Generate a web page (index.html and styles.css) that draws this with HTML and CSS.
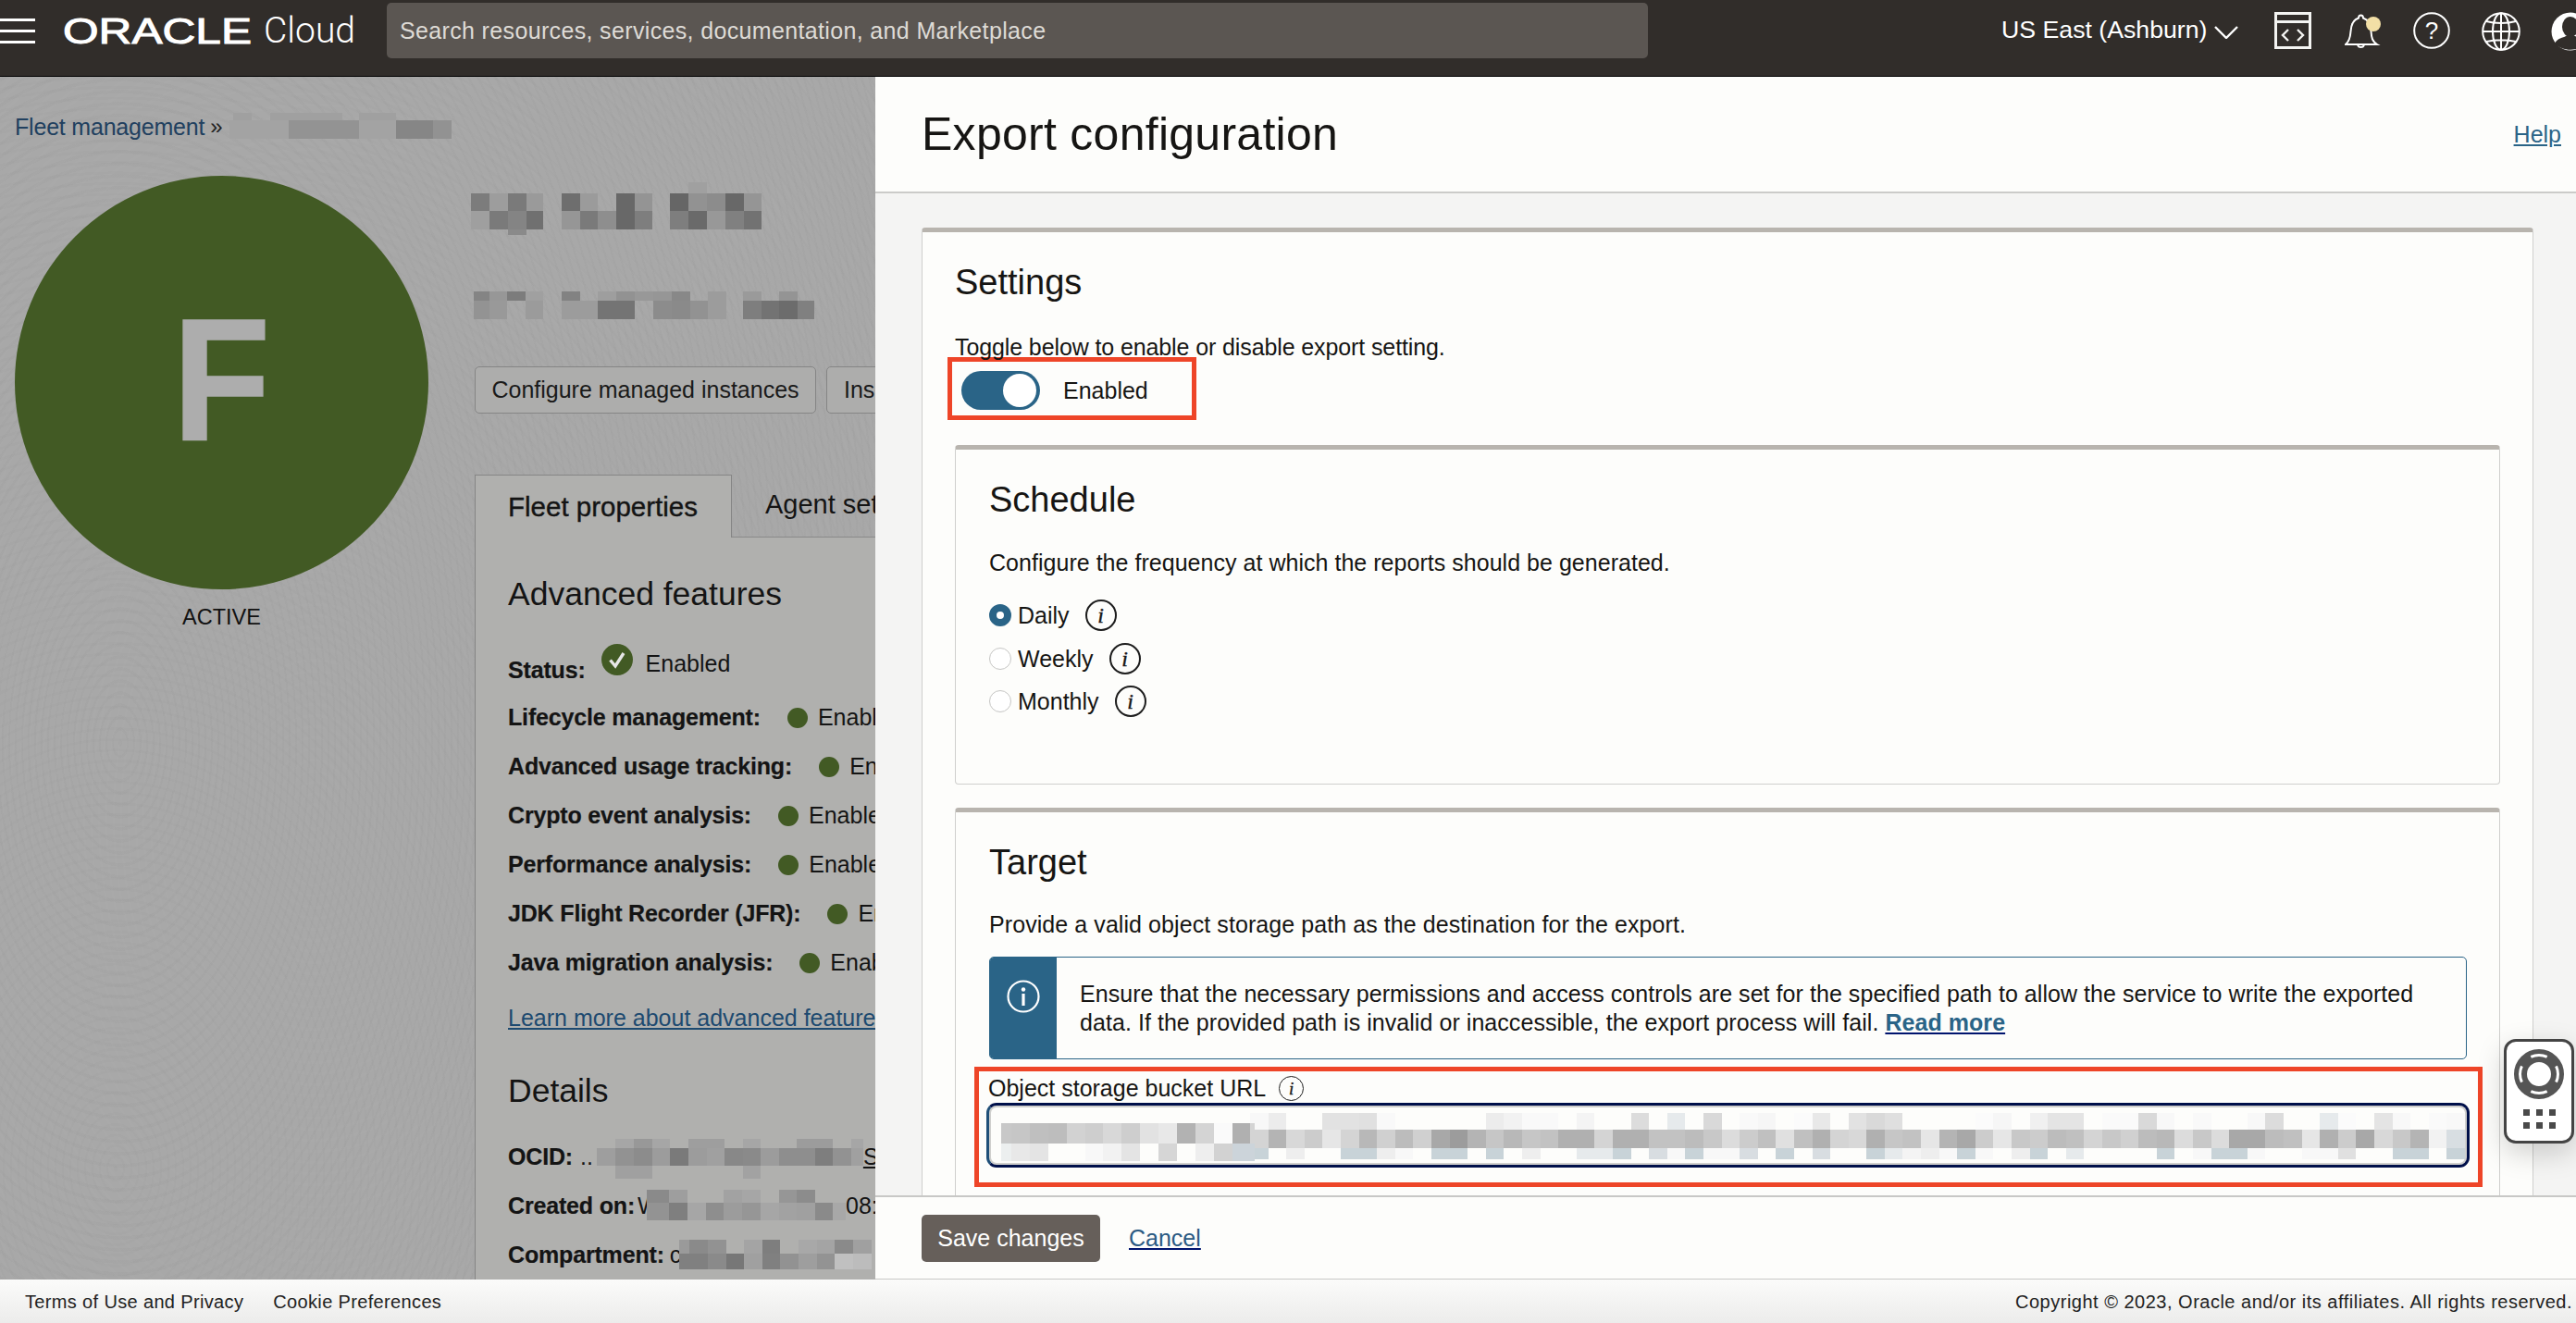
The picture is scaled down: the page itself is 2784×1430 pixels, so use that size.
FILE: index.html
```html
<!DOCTYPE html>
<html lang="en">
<head>
<meta charset="utf-8">
<title>Export configuration</title>
<link rel="stylesheet" href="styles.css">
</head>
<body>
<header class="topbar">
  <div class="burger"><i></i><i></i><i></i></div>
  <svg class="logo" width="205" height="34" viewBox="0 0 205 34"><text x="0" y="31" textLength="204" lengthAdjust="spacingAndGlyphs">ORACLE</text></svg>
  <span class="cloud">Cloud</span>
  <div class="search">Search resources, services, documentation, and Marketplace</div>
  <div class="region">US East (Ashburn)<svg width="26" height="14" viewBox="0 0 26 14"><path d="M1 1l12 12L25 1" fill="none" stroke="#fff" stroke-width="2.4"/></svg></div>
  <svg class="ic shell" width="40" height="40" viewBox="0 0 40 40"><g fill="none" stroke="#f4f4f2"><rect x="1.5" y="1.5" width="37" height="37" stroke-width="3"/><path d="M1 10.500h38" stroke-width="3"/><path d="M15 19l-6 6 6 6M25 19l6 6-6 6" stroke-width="2.400"/></g></svg>
  <svg class="ic bell" width="40" height="42" viewBox="0 0 40 42"><g fill="none" stroke="#fff" stroke-width="2"><path d="M1 34c4-3 5-7 5.500-14C7 12 10 7 15 5.500c0-4 5-4 5 0C25 7 28 12 28.500 20c.5 7 1.500 11 6.500 14z"/><path d="M14 35a4 4 0 0 0 7 0"/></g><circle cx="31" cy="12" r="8" fill="#f2dfa6"/></svg>
  <svg class="ic help" width="40" height="40" viewBox="0 0 40 40"><circle cx="20" cy="20" r="18.800" fill="none" stroke="#fff" stroke-width="2"/><text x="20" y="29" class="qm">?</text></svg>
  <svg class="ic globe" width="42" height="42" viewBox="0 0 42 42"><g fill="none" stroke="#fff" stroke-width="2"><circle cx="21" cy="21" r="19.800"/><ellipse cx="21" cy="21" rx="9" ry="19.800"/><path d="M21 1v40M1.500 21h39M5 10c9 2.500 23 2.500 32 0M5 32c9-2.500 23-2.500 32 0"/></g></svg>
  <svg class="ic user" width="42" height="42" viewBox="0 0 42 42"><circle cx="21" cy="21" r="20.500" fill="#fff"/><ellipse cx="21" cy="16" rx="9" ry="11" fill="#312d2a"/><path d="M4 34c3-6 9-6 12-8h10c3 2 9 2 12 8-8 9-26 9-34 0z" fill="#312d2a"/></svg>
</header>

<main class="main">
  <section class="page">
    <nav class="crumbs"><a class="crumb-link">Fleet management</a><span class="crumb-sep">»</span>
      <svg class="mosaic crumb-blur" width="240" height="28" viewBox="0 0 240 28"><path fill="#a0a0a0" d="M4 0h20v8H4zM44 0h78v8H44zM140 0h40v8h-40z"/><path fill="#a3a3a3" d="M0 8h64v20H0zM140 8h40v20h-40z"/><path fill="#939393" d="M64 8h76v20H64z"/><path fill="#868686" d="M180 8h40v20h-40z"/><path fill="#929292" d="M220 8h20v20h-20z"/></svg>
    </nav>
    <div class="columns">
      <aside class="avatar-col">
        <div class="avatar"><span class="avatar-letter">F</span></div>
        <div class="state">ACTIVE</div>
      </aside>
      <div class="content">
        <svg class="mosaic blur-title" width="314" height="57" viewBox="0 0 314 57"><g>
          <rect x="0" y="12" width="20" height="19" fill="#7c7c7c"/><rect x="20" y="12" width="20" height="19" fill="#9d9d9d"/><rect x="40" y="12" width="20" height="19" fill="#7a7a7a"/><rect x="60" y="12" width="18" height="19" fill="#9a9a9a"/>
          <rect x="98" y="12" width="20" height="19" fill="#6e6e6e"/><rect x="118" y="12" width="19" height="19" fill="#9b9b9b"/><rect x="157" y="12" width="20" height="19" fill="#686868"/><rect x="177" y="12" width="19" height="19" fill="#949494"/>
          <rect x="215" y="12" width="20" height="19" fill="#666666"/><rect x="235" y="12" width="20" height="19" fill="#929292"/><rect x="255" y="12" width="20" height="19" fill="#8c8c8c"/><rect x="275" y="12" width="20" height="19" fill="#686868"/><rect x="295" y="12" width="19" height="19" fill="#959595"/>
          <rect x="0" y="31" width="20" height="20" fill="#9f9f9f"/><rect x="20" y="31" width="20" height="20" fill="#7a7a7a"/><rect x="40" y="31" width="20" height="20" fill="#848484"/><rect x="60" y="31" width="18" height="20" fill="#707070"/>
          <rect x="98" y="31" width="20" height="20" fill="#969696"/><rect x="118" y="31" width="19" height="20" fill="#7a7a7a"/><rect x="137" y="31" width="20" height="20" fill="#8e8e8e"/><rect x="157" y="31" width="20" height="20" fill="#686868"/><rect x="177" y="31" width="19" height="20" fill="#7e7e7e"/>
          <rect x="215" y="31" width="20" height="20" fill="#7e7e7e"/><rect x="235" y="31" width="20" height="20" fill="#6a6a6a"/><rect x="255" y="31" width="20" height="20" fill="#989898"/><rect x="275" y="31" width="20" height="20" fill="#808080"/><rect x="295" y="31" width="19" height="20" fill="#727272"/>
          <rect x="40" y="51" width="20" height="6" fill="#8a8a8a"/><rect x="235" y="0" width="20" height="12" fill="#a0a0a0"/></g></svg>
        <svg class="mosaic blur-sub" width="368" height="30" viewBox="0 0 368 30">
          <rect x="0" y="0" width="17" height="10" fill="#848484"/><rect x="17" y="0" width="19" height="10" fill="#979797"/><rect x="36" y="0" width="20" height="10" fill="#7c7c7c"/><rect x="56" y="0" width="19" height="10" fill="#a0a0a0"/><rect x="95" y="0" width="20" height="10" fill="#828282"/><rect x="134" y="0" width="20" height="10" fill="#9e9e9e"/><rect x="154" y="0" width="20" height="10" fill="#929292"/><rect x="174" y="0" width="20" height="10" fill="#989898"/><rect x="194" y="0" width="20" height="10" fill="#969696"/><rect x="214" y="0" width="20" height="10" fill="#888888"/><rect x="253" y="0" width="20" height="10" fill="#9c9c9c"/><rect x="291" y="0" width="20" height="10" fill="#9a9a9a"/><rect x="330" y="0" width="20" height="10" fill="#949494"/>
          <rect x="0" y="10" width="17" height="20" fill="#939393"/><rect x="17" y="10" width="19" height="20" fill="#999999"/><rect x="56" y="10" width="19" height="20" fill="#9b9b9b"/><rect x="95" y="10" width="39" height="20" fill="#9c9c9c"/><rect x="134" y="10" width="40" height="20" fill="#747474"/><rect x="194" y="10" width="20" height="20" fill="#8c8c8c"/><rect x="214" y="10" width="20" height="20" fill="#8a8a8a"/><rect x="234" y="10" width="19" height="20" fill="#929292"/><rect x="253" y="10" width="20" height="20" fill="#9c9c9c"/><rect x="291" y="10" width="20" height="20" fill="#7e7e7e"/><rect x="311" y="10" width="19" height="20" fill="#737373"/><rect x="330" y="10" width="20" height="20" fill="#6c6c6c"/><rect x="350" y="10" width="18" height="20" fill="#808080"/>
        </svg>
        <div class="actions"><button class="btn">Configure managed instances</button><button class="btn">Inspect fleet</button></div>
        <div class="tabs"><div class="tab tab-on">Fleet properties</div><div class="tab tab-rest">Agent settings</div></div>
        <div class="tab-card">
          <h2 class="h-left">Advanced features</h2>
          <div class="prop status-row"><b>Status:</b><svg class="check" width="34" height="34" viewBox="0 0 34 34"><circle cx="17" cy="17" r="17" fill="#425a24"/><path d="M9.500 17.500l5.500 6.500 9-14" fill="none" stroke="#e6e6e6" stroke-width="3.400"/></svg><span class="status-val">Enabled</span></div>
          <div class="prop"><b>Lifecycle management:</b><i class="dot"></i><span>Enabled</span></div>
          <div class="prop"><b>Advanced usage tracking:</b><i class="dot"></i><span>Enabled</span></div>
          <div class="prop"><b>Crypto event analysis:</b><i class="dot"></i><span>Enabled</span></div>
          <div class="prop"><b>Performance analysis:</b><i class="dot"></i><span>Enabled</span></div>
          <div class="prop"><b>JDK Flight Recorder (JFR):</b><i class="dot"></i><span>Enabled</span></div>
          <div class="prop"><b>Java migration analysis:</b><i class="dot"></i><span>Enabled</span></div>
          <a class="learn">Learn more about advanced features</a>
          <h2 class="h-left details">Details</h2>
          <div class="prop"><b>OCID:</b><span class="ocid-dots">..</span>
            <svg class="mosaic blur-ocid" width="288" height="43" viewBox="0 0 288 43">
              <rect x="20" y="0" width="20" height="10" fill="#a6a6a6"/><rect x="40" y="0" width="20" height="10" fill="#989898"/><rect x="60" y="0" width="19" height="10" fill="#a6a6a6"/><rect x="99" y="0" width="39" height="10" fill="#9e9e9e"/><rect x="158" y="0" width="19" height="10" fill="#a6a6a6"/><rect x="216" y="0" width="39" height="10" fill="#9c9c9c"/><rect x="275" y="0" width="13" height="10" fill="#a6a6a6"/>
              <rect x="0" y="10" width="20" height="19" fill="#9e9e9e"/><rect x="20" y="10" width="20" height="19" fill="#929292"/><rect x="40" y="10" width="20" height="19" fill="#8c8c8c"/><rect x="60" y="10" width="19" height="19" fill="#9c9c9c"/><rect x="79" y="10" width="20" height="19" fill="#7a7a7a"/><rect x="99" y="10" width="20" height="19" fill="#9c9c9c"/><rect x="119" y="10" width="19" height="19" fill="#a0a0a0"/><rect x="138" y="10" width="20" height="19" fill="#888888"/><rect x="158" y="10" width="19" height="19" fill="#8a8a8a"/><rect x="177" y="10" width="20" height="19" fill="#9c9c9c"/><rect x="197" y="10" width="39" height="19" fill="#8e8e8e"/><rect x="236" y="10" width="19" height="19" fill="#7e7e7e"/><rect x="255" y="10" width="20" height="19" fill="#929292"/><rect x="275" y="10" width="13" height="19" fill="#a0a0a0"/>
              <rect x="20" y="29" width="40" height="14" fill="#a0a0a0"/><rect x="158" y="29" width="19" height="14" fill="#a2a2a2"/>
            </svg><a class="copy">Show</a></div>
          <div class="prop"><b>Created on:</b><span class="cut-v">W</span>
            <svg class="mosaic blur-created" width="215" height="33" viewBox="0 0 215 33">
              <rect x="0" y="0" width="24" height="14" fill="#8a8a8a"/><rect x="24" y="0" width="20" height="14" fill="#9e9e9e"/><rect x="83" y="0" width="20" height="14" fill="#a2a2a2"/><rect x="103" y="0" width="20" height="14" fill="#a6a6a6"/><rect x="143" y="0" width="19" height="14" fill="#969696"/><rect x="162" y="0" width="20" height="14" fill="#8c8c8c"/>
              <rect x="0" y="14" width="24" height="19" fill="#939393"/><rect x="24" y="14" width="20" height="19" fill="#7f7f7f"/><rect x="44" y="14" width="20" height="19" fill="#a6a6a6"/><rect x="64" y="14" width="19" height="19" fill="#8e8e8e"/><rect x="83" y="14" width="20" height="19" fill="#9c9c9c"/><rect x="103" y="14" width="20" height="19" fill="#969696"/><rect x="123" y="14" width="20" height="19" fill="#a6a6a6"/><rect x="143" y="14" width="19" height="19" fill="#a2a2a2"/><rect x="162" y="14" width="20" height="19" fill="#a0a0a0"/><rect x="182" y="14" width="19" height="19" fill="#8a8a8a"/><rect x="201" y="14" width="14" height="19" fill="#a8a8a8"/>
            </svg><span>08:14</span></div>
          <div class="prop"><b>Compartment:</b><span class="cut-c">c</span>
            <svg class="mosaic blur-comp" width="213" height="32" viewBox="0 0 213 32">
              <rect x="0" y="0" width="11" height="15" fill="#9a9a9a"/><rect x="11" y="0" width="20" height="15" fill="#8a8a8a"/><rect x="31" y="0" width="20" height="15" fill="#929292"/><rect x="70" y="0" width="20" height="15" fill="#a4a4a4"/><rect x="90" y="0" width="19" height="15" fill="#7e7e7e"/><rect x="129" y="0" width="20" height="15" fill="#a8a8a8"/><rect x="149" y="0" width="19" height="15" fill="#a4a4a4"/><rect x="168" y="0" width="20" height="15" fill="#8a8a8a"/><rect x="188" y="0" width="20" height="15" fill="#a0a0a0"/>
              <rect x="0" y="15" width="31" height="17" fill="#808080"/><rect x="31" y="15" width="20" height="17" fill="#8a8a8a"/><rect x="51" y="15" width="19" height="17" fill="#777777"/><rect x="70" y="15" width="20" height="17" fill="#a0a0a0"/><rect x="90" y="15" width="19" height="17" fill="#808080"/><rect x="109" y="15" width="20" height="17" fill="#929292"/><rect x="129" y="15" width="20" height="17" fill="#9e9e9e"/><rect x="149" y="15" width="19" height="17" fill="#939393"/><rect x="168" y="15" width="20" height="17" fill="#c0c0c0"/><rect x="188" y="15" width="20" height="17" fill="#bcbcbc"/>
            </svg></div>
        </div>
      </div>
    </div>
  </section>

  <section class="panel">
    <div class="panel-head"><h1>Export configuration</h1><a class="help-link">Help</a></div>
    <div class="panel-body">
      <div class="card outer">
        <h2>Settings</h2>
        <p class="desc desc-toggle">Toggle below to enable or disable export setting.</p>
        <div class="mark toggle-mark"><span class="switch"><i></i></span><span class="switch-label">Enabled</span></div>
        <div class="card schedule">
          <h2>Schedule</h2>
          <p class="desc after-h desc-freq">Configure the frequency at which the reports should be generated.</p>
          <div class="radios">
            <div class="radio-row"><i class="radio on"></i><span>Daily</span><i class="info">i</i></div>
            <div class="radio-row"><i class="radio"></i><span>Weekly</span><i class="info">i</i></div>
            <div class="radio-row"><i class="radio"></i><span>Monthly</span><i class="info">i</i></div>
          </div>
        </div>
        <div class="card target">
          <h2>Target</h2>
          <p class="desc after-h desc-path">Provide a valid object storage path as the destination for the export.</p>
          <div class="banner">
            <div class="banner-side"><svg width="36" height="36" viewBox="0 0 36 36"><circle cx="18" cy="18" r="16.500" fill="none" stroke="#fff" stroke-width="2.200"/><circle cx="18" cy="10.500" r="2.200" fill="#fff"/><path d="M18 15v13" stroke="#fff" stroke-width="3.200"/></svg></div>
            <p>Ensure that the necessary permissions and access controls are set for the specified path to allow the service to write the exported<br>data. If the provided path is invalid or inaccessible, the export process will fail. <a>Read more</a></p>
          </div>
          <div class="mark url-mark">
            <label class="url-label">Object storage bucket URL<i class="info small">i</i></label>
            <div class="url-input">
              <svg class="mosaic url-a" width="274" height="41" viewBox="0 0 274 41">
                <g><rect x="0" y="0" width="11" height="22" fill="#c8c8c8"/><rect x="11" y="0" width="20" height="22" fill="#c6c6c6"/><rect x="31" y="0" width="20" height="22" fill="#bfbfbf"/><rect x="51" y="0" width="20" height="22" fill="#bdbdbd"/><rect x="71" y="0" width="20" height="22" fill="#d2d2d2"/><rect x="91" y="0" width="19" height="22" fill="#cecece"/><rect x="110" y="0" width="20" height="22" fill="#d8d8d8"/><rect x="130" y="0" width="20" height="22" fill="#cecece"/><rect x="150" y="0" width="20" height="22" fill="#e2e2e2"/><rect x="170" y="0" width="20" height="22" fill="#e8e8e8"/><rect x="190" y="0" width="20" height="22" fill="#b2b2b2"/><rect x="210" y="0" width="20" height="22" fill="#d4d4d4"/><rect x="230" y="0" width="20" height="22" fill="#fafafa"/><rect x="250" y="0" width="19" height="22" fill="#b0b0b0"/><rect x="269" y="0" width="5" height="22" fill="#d4d4d4"/></g>
                <g><rect x="0" y="22" width="11" height="19" fill="#ecefef"/><rect x="11" y="22" width="20" height="19" fill="#e8e8e8"/><rect x="31" y="22" width="20" height="19" fill="#e4e4e4"/><rect x="91" y="22" width="19" height="19" fill="#f8f8f8"/><rect x="110" y="22" width="20" height="19" fill="#f2f2f2"/><rect x="130" y="22" width="20" height="19" fill="#e4e4e4"/><rect x="170" y="22" width="20" height="19" fill="#d6d6d6"/><rect x="210" y="22" width="20" height="19" fill="#eeeeee"/><rect x="230" y="22" width="20" height="19" fill="#d2d2d2"/><rect x="250" y="22" width="24" height="19" fill="#ccd4da"/></g>
              </svg>
              <svg class="mosaic url-b" width="1313" height="50" viewBox="0 0 67 50" preserveAspectRatio="none">
                <g stroke-width="18">
                  <path stroke="#f8f8f8" d="M0 9h1M50 9h1M55 9h1M63 9h1M66 9h1"/><path stroke="#f9f9f9" d="M7 9h1M15 9h2M27 9h1M52 9h1"/><path stroke="#ececec" d="M1 9h1M13 9h1"/><path stroke="#e2e2e2" d="M4 9h2M33 9h1"/><path stroke="#e0e0e0" d="M6 9h1"/><path stroke="#f2f2f2" d="M14 9h1"/><path stroke="#f4f4f4" d="M18 9h1"/><path stroke="#dcdcdc" d="M21 9h1M56 9h1"/><path stroke="#e6eaec" d="M23 9h1M59 9h1"/><path stroke="#d9d9d9" d="M25 9h1M34 9h1M49 9h1"/><path stroke="#f6f6f6" d="M28 9h1M41 9h1"/><path stroke="#fbfbfb" d="M30 9h1M40 9h1M60 9h1"/><path stroke="#e8e8e8" d="M31 9h1"/><path stroke="#dfdfdf" d="M35 9h1"/><path stroke="#f0f0f0" d="M43 9h1"/><path stroke="#e4e4e4" d="M44 9h2M62 9h1"/><path stroke="#fafafa" d="M47 9h2M65 9h1"/>
                </g>
                <g stroke-width="20">
                  <path stroke="#9c9c9c" d="M11 28h1"/><path stroke="#a8a8a8" d="M10 28h1M39 28h1M54 28h2M61 28h1"/><path stroke="#b0b0b0" d="M17 28h2M20 28h2M31 28h1M34 28h1M59 28h1"/><path stroke="#b4b4b4" d="M1 28h1M12 28h1M38 28h1M64 28h1"/><path stroke="#b8b8b8" d="M6 28h1M14 28h1M50 28h1"/><path stroke="#bcbcbc" d="M8 28h1M24 28h1M44 28h1M49 28h1M56 28h1"/><path stroke="#c0c0c0" d="M28 28h1M30 28h1M45 28h1M57 28h1"/><path stroke="#c2c2c2" d="M16 28h1M22 28h2M36 28h1"/><path stroke="#c6c6c6" d="M13 28h1M15 28h1M35 28h1"/><path stroke="#c8c8c8" d="M25 28h1M42 28h1M47 28h1M52 28h1M63 28h1"/><path stroke="#cccccc" d="M3 28h1M27 28h1M40 28h1M43 28h1M60 28h1"/><path stroke="#d0d0d0" d="M7 28h1M9 28h1M48 28h1"/><path stroke="#d4d4d4" d="M0 28h1M5 28h1M19 28h1M32 28h1M46 28h1"/><path stroke="#d8d8d8" d="M2 28h1M33 28h1M62 28h1"/><path stroke="#dcdcdc" d="M26 28h1M51 28h1M53 28h1"/><path stroke="#e0e0e0" d="M29 28h1"/><path stroke="#e6e6e6" d="M4 28h1M37 28h1M41 28h1M58 28h1"/><path stroke="#f2f2f2" d="M65 28h1"/><path stroke="#d8dee2" d="M66 28h1"/>
                </g>
                <g stroke-width="12">
                  <path stroke="#c8d3d8" d="M0 44h1M5 44h2M10 44h2M13 44h1M20 44h1M24 44h1M29 44h1M34 44h1M39 44h1M43 44h1M50 44h1M53 44h2M63 44h2M66 44h1"/><path stroke="#eeeeee" d="M2 44h1M7 44h1M15 44h1M37 44h1M42 44h1"/><path stroke="#f8f8f8" d="M8 44h1M23 44h1M25 44h2M38 44h1M40 44h1M52 44h1M55 44h1M58 44h2"/><path stroke="#e6eaec" d="M18 44h2M35 44h1M45 44h1"/><path stroke="#d8dde1" d="M22 44h1M27 44h1M31 44h1"/><path stroke="#e0e0e0" d="M60 44h1"/><path stroke="#f4f4f4" d="M36 44h1"/>
                </g>
              </svg>
            </div>
          </div>
        </div>
      </div>
    </div>
    <div class="panel-foot"><button class="save">Save changes</button><a class="cancel">Cancel</a></div>
    <div class="float-help">
      <svg width="58" height="58" viewBox="0 0 58 58"><circle cx="29" cy="29" r="20" fill="none" stroke="#555" stroke-width="14"/><circle cx="29" cy="29" r="20.500" fill="none" stroke="#fff" stroke-width="3" stroke-dasharray="14 11" stroke-dashoffset="7" pathLength="100"/></svg>
      <div class="float-dots"><i></i><i></i><i></i><i></i><i></i><i></i></div>
    </div>
  </section>
</main>

<footer class="footer">
  <a>Terms of Use and Privacy</a><a>Cookie Preferences</a>
  <span class="copyright">Copyright © 2023, Oracle and/or its affiliates. All rights reserved.</span>
</footer>
</body>
</html>
```
FILE: styles.css
```css
* { box-sizing: border-box; }
html, body { margin: 0; height: 100%; }
body { width: 2784px; height: 1430px; overflow: hidden; display: flex; flex-direction: column; font-family: "Liberation Sans", Arial, sans-serif; font-size: 25px; line-height: 30px; color: #161513; background: #fff; }
h1, h2, p { margin: 0; font-weight: 400; }
i { font-style: normal; }

/* top bar */
.topbar { height: 83px; flex: none; display: flex; align-items: flex-start; background: #312d2a; border-bottom: 1px solid #000; color: #fff; position: relative; }
.burger { width: 38px; flex: none; margin-top: 20px; display: flex; flex-direction: column; gap: 9px; }
.burger i { height: 3px; background: #fff; display: block; }
.logo { margin: 16px 0 0 30px; flex: none; overflow: visible; }
.logo text { font-family: "Liberation Sans", sans-serif; font-size: 39px; fill: #fff; stroke: #fff; stroke-width: 1; }
.cloud { margin: 10px 0 0 12px; width: 133px; flex: none; font-family: Roboto, sans-serif; font-weight: 300; font-size: 39px; line-height: 46px; color: #fff; }
.search { width: 1363px; height: 60px; flex: none; margin-top: 3px; padding-left: 14px; background: #5b5652; border-radius: 5px; line-height: 60px; color: #dedbd6; font-size: 25px; letter-spacing: .35px; }
.region { margin: 17px 0 0 382px; width: 254px; flex: none; font-size: 26.700px; white-space: nowrap; display: flex; align-items: center; gap: 8px; }
.region svg { margin-top: 6px; flex: none; }
.ic { flex: none; margin-top: 13px; }
.shell { margin-left: 41px; }
.bell { margin-left: 36px; margin-top: 14px; }
.help { margin-left: 34px; }
.globe { margin-left: 34px; }
.user { margin-left: 33px; }
.qm { font-family: "Liberation Sans", sans-serif; font-size: 26px; fill: #fff; text-anchor: middle; }

/* layout */
.main { flex: 1; min-height: 0; display: flex; position: relative; }

/* dimmed page */
.page { width: 946px; flex: none; overflow: hidden; padding: 39px 0 0 16px; color: #141414;
  background-color: #a8a8a8;
  background-image:
    repeating-radial-gradient(ellipse 70px 130px at 130px 720px, rgba(0,0,0,.014) 0 2px, transparent 2px 7px),
    repeating-radial-gradient(ellipse 80px 120px at 340px 800px, rgba(255,255,255,.014) 0 2px, transparent 2px 8px),
    repeating-radial-gradient(ellipse 90px 130px at 125px 1180px, rgba(0,0,0,.012) 0 2px, transparent 2px 8px); }
.crumbs { display: flex; align-items: center; height: 30px; white-space: nowrap; }
.crumb-link { color: #21405f; letter-spacing: -.2px; }
.crumb-sep { margin-left: 6px; color: #222; font-size: 24px; }
.crumb-blur { margin-left: 7px; margin-top: -2px; }
.mosaic { display: block; flex: none; shape-rendering: crispEdges; }
.columns { display: flex; margin-top: 38px; }
.avatar-col { width: 447px; flex: none; margin-right: 50px; text-align: center; }
.avatar { width: 447px; height: 447px; border-radius: 50%; background: #425a24; color: #adadad; font-weight: 700; font-size: 188px; line-height: 440px; }
.avatar-letter { display: inline-block; transform: scaleX(.92); -webkit-text-stroke: 1.500px #adadad; }
.state { margin-top: 15px; font-size: 23.500px; line-height: 30px; color: #111; }
.content { width: 900px; flex: none; }
.blur-title { margin: 7px 0 0 -4px; }
.blur-sub { margin: 61px 0 0 -1px; }
.actions { display: flex; gap: 11px; margin-top: 51px; }
.btn { height: 51px; padding: 0 18px; background: #adadac; border: 1px solid #858585; border-radius: 5px; font: 25px "Liberation Sans", sans-serif; color: #1a1a1a; white-space: nowrap; }
.btn:first-child { width: 369px; padding: 0; }
.tabs { display: flex; height: 68px; margin-top: 66px; }
.tab { white-space: nowrap; font-size: 29px; }
.tab-on { width: 278px; padding-left: 35px; font-size: 29.500px; line-height: 68px; background: #b0b0ae; border: 1px solid #858585; border-bottom: 0; -webkit-text-stroke: .4px #141414; }
.tab-rest { flex: 1; padding-left: 36px; border-bottom: 1px solid #8a8a8a; line-height: 64px; }
.tab-card { background: #b0b0ae; border-left: 1px solid #858585; padding: 39px 0 40px 35px; height: 820px; }
.h-left { font-size: 35.500px; line-height: 44px; margin-bottom: 31px; }
.details { margin: 42px 0 22.500px; }
.prop { display: flex; align-items: center; height: 53px; white-space: nowrap; }
.prop b { font-weight: 700; letter-spacing: -.17px; -webkit-text-stroke: .2px #141414; }
.status-row b { padding-top: 5px; }
.check { margin: 0 0 17px 17px; }
.status-val { margin: 0 0 9px 14px; }
.dot { width: 22px; height: 22px; border-radius: 50%; background: #425a24; margin: 2px 11px 0 29px; flex: none; }
.learn { display: block; margin-top: 18.500px; color: #1d4a70; text-decoration: underline; white-space: nowrap; }
.ocid-dots { margin-left: 8px; }
.blur-ocid { margin-left: 4px; margin-top: 5px; }
.copy { text-decoration: underline; }
.cut-v { margin-left: 3px; width: 10px; overflow: hidden; }
.blur-created { margin-top: 0; }
.cut-c { margin-left: 6px; width: 10px; overflow: hidden; }

/* panel */
.panel { flex: 1; min-width: 0; display: flex; flex-direction: column; background: #fdfdfb; position: relative; }
.panel-head { height: 126px; flex: none; display: flex; align-items: center; justify-content: space-between; padding: 0 16px 0 50px; border-bottom: 2px solid #cbcbc9; }
.panel-head h1 { font-size: 50px; line-height: 60px; letter-spacing: .27px; }
.help-link { color: #2a6487; text-decoration: underline; }
.panel-body { flex: 1; min-height: 0; overflow: hidden; background: #f4f4f3; padding: 37px 46px 0 50px; }
.card { background: #fdfdfb; border: 1px solid #cfcfcd; border-top: 5px solid #b8b4ae; border-radius: 4px; }
.card h2 { font-size: 38px; line-height: 44px; }
.outer { padding: 32px 35px 60px 35px; }
.desc { line-height: 30px; margin-top: 33px; }
.desc-toggle { letter-spacing: -.11px; }
.desc-freq { letter-spacing: .03px; }
.desc-path { letter-spacing: .075px; }
.after-h { margin-top: 31px; }
.mark { border: 5px solid #ee4528; }
.toggle-mark { width: 269px; height: 68px; margin: -4px 0 0 -8px; padding: 4px 0 0 10px; display: flex; align-items: center; gap: 25px; }
.switch { width: 85px; height: 42px; border-radius: 21px; background: #2a6487; display: flex; align-items: center; justify-content: flex-end; padding-right: 4px; }
.switch i { width: 36px; height: 36px; border-radius: 50%; background: #fff; display: block; }
.schedule { height: 367px; margin-top: 27px; padding: 32px 35px 0 36px; }
.radios { margin-top: 19px; }
.radio-row { height: 46.500px; display: flex; align-items: center; }
.radio { width: 24px; height: 24px; border-radius: 50%; border: 1px solid #c6c6c4; background: #fff; flex: none; }
.radio.on { border: 8px solid #2a6487; }
.radio-row span { margin-left: 7px; }
.info { width: 34px; height: 34px; margin-left: 17px; border: 2px solid #1d1d1d; border-radius: 50%; display: inline-flex; align-items: center; justify-content: center; font: italic 24px/1 "Liberation Serif", serif; flex: none; -webkit-text-stroke: .4px #1d1d1d; }
.info.small { width: 27px; height: 27px; margin-left: 14px; font-size: 19px; border-width: 1.500px; }
.target { margin-top: 25px; padding: 32px 35px 60px 36px; }
.target .after-h { margin-top: 30px; }
.banner { height: 111px; margin-top: 20px; display: flex; border: 1px solid #2a6487; border-radius: 5px; overflow: hidden; }
.banner-side { width: 72px; flex: none; background: #2a6487; display: flex; justify-content: center; padding-top: 24px; }
.banner p { margin: 24px 0 0 25px; line-height: 31px; white-space: nowrap; letter-spacing: .055px; }
.banner a { color: #2a6487; font-weight: 700; text-decoration: underline; text-decoration-color: #00146e; }
.url-mark { margin: 8px -17px 0 -16px; height: 130px; padding: 3px 9px 0 8px; }
.url-label { display: flex; align-items: center; height: 30px; padding-left: 2px; }
.url-input { height: 70px; margin-top: 1px; display: grid; justify-content: start; align-content: start; border: 3px solid #00104a; border-left-color: #1f4f78; border-radius: 11px; box-shadow: inset 0 0 0 2px #cfcfcd; }
.url-a, .url-b { grid-area: 1 / 1; }
.url-a { margin: 19px 0 0 13px; z-index: 1; }
.url-b { margin: 8px 0 0 282px; }
.panel-foot { height: 91px; flex: none; display: flex; align-items: center; gap: 31px; padding-left: 50px; border-top: 2px solid #c8c8c6; border-bottom: 1px solid #c8c8c6; }
.save { width: 193px; height: 51px; padding: 0; background: #665f5a; border: 0; border-radius: 5px; color: #fff; font: 25px "Liberation Sans", sans-serif; }
.cancel { color: #2b5a83; text-decoration: underline; text-decoration-color: #00146e; }
.float-help { position: absolute; left: 1760px; top: 1040px; width: 76px; height: 113px; background: #fff; border: 3px solid #444; border-radius: 13px; box-shadow: 0 10px 30px rgba(0,0,0,.18); display: flex; flex-direction: column; align-items: center; padding-top: 6px; }
.float-dots { margin-top: 9px; display: grid; grid-template-columns: repeat(3, 7px); gap: 7px 7px; }
.float-dots i { width: 7px; height: 7px; background: #4a4a4a; display: block; }

/* footer */
.footer { height: 47px; flex: none; display: flex; align-items: center; gap: 32px; padding: 0 4px 0 27px; background: linear-gradient(#fbfbfa, #ececeb); font-size: 20px; letter-spacing: .35px; color: #222; }
.copyright { margin-left: auto; letter-spacing: .5px; }
```
